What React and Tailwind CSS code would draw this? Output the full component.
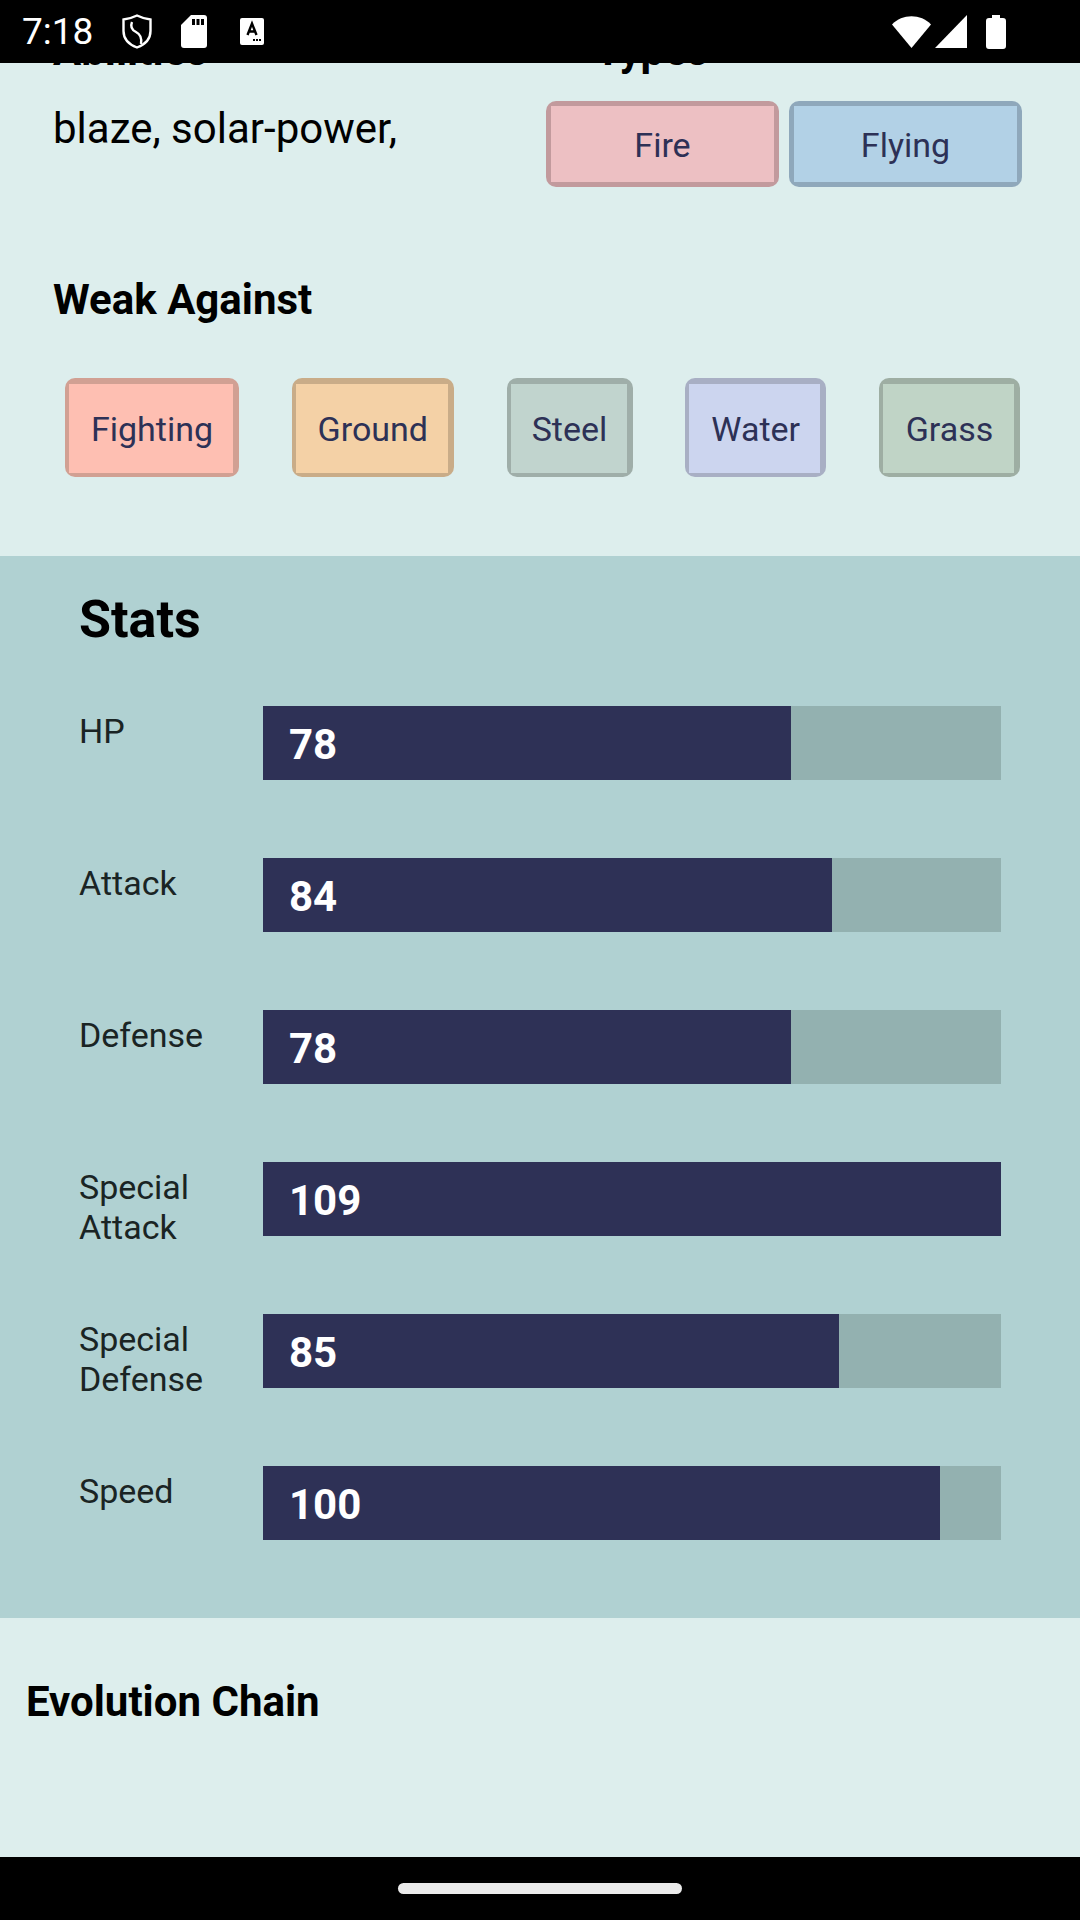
const stats = [
  { name: "HP", value: 78, w: 528 },
  { name: "Attack", value: 84, w: 569 },
  { name: "Defense", value: 78, w: 528 },
  { name: "Special Attack", value: 109, w: 738 },
  { name: "Special Defense", value: 85, w: 576 },
  { name: "Speed", value: 100, w: 677 },
];

const weak = [
  { t: "Fighting", w: "w-[174px]", bg: "bg-[#febfb2]", bd: "bg-[#d1a093]" },
  { t: "Ground", w: "w-[162px]", bg: "bg-[#f4d1a6]", bd: "bg-[#c9ac88]" },
  { t: "Steel", w: "w-[126px]", bg: "bg-[#c1d4ce]", bd: "bg-[#9faea9]" },
  { t: "Water", w: "w-[141px]", bg: "bg-[#ccd5ef]", bd: "bg-[#a8afc4]" },
  { t: "Grass", w: "w-[141px]", bg: "bg-[#c0d4c6]", bd: "bg-[#9eaea3]" },
];

function Chip({ t, w, h, bg, bd, edge, inner }) {
  return (
    <div className={`${w} ${h} ${bd} ${edge} rounded-[10px] flex`}>
      <div className={`flex-1 ${bg} ${inner} flex items-center justify-center text-[34px] text-[#2d3156]`}>{t}</div>
    </div>
  );
}

function StatusBar() {
  return (
    <div className="relative z-10 h-[63px] bg-black flex items-center justify-between text-white shrink-0">
      <div className="flex items-center pl-[22px]">
        <span className="text-[37px] leading-none w-[69px]">7:18</span>
        <svg className="ml-[31px]" width="30" height="35" viewBox="0 0 30 35" fill="none" stroke="white" strokeWidth="2.4">
          <path d="M15 1.5 C19 3.5 24 5 28.5 5.5 V17 C28.5 25 23 30.5 15 33.5 C7 30.5 1.5 25 1.5 17 V5.5 C6 5 11 3.5 15 1.5 Z" />
          <path d="M10 8 C8 13 10 16 14 18 C18 20 20 24 19 30" />
        </svg>
        <svg className="ml-[29px]" width="26" height="33" viewBox="0 0 26 33" fill="white">
          <path d="M10 0 H23 a3 3 0 0 1 3 3 V30 a3 3 0 0 1 -3 3 H3 a3 3 0 0 1 -3 -3 V10 Z" />
          <rect x="11" y="4" width="3" height="6" fill="black" />
          <rect x="15.5" y="4" width="3" height="6" fill="black" />
          <rect x="20" y="4" width="3" height="6" fill="black" />
        </svg>
        <svg className="ml-[33px]" width="24" height="27" viewBox="0 0 24 27">
          <rect width="24" height="27" rx="2" fill="white" />
          <path d="M7.5 17 L12 5.5 L16.5 17 M9.2 13.5 H14.8" fill="none" stroke="black" strokeWidth="2.4" />
          <rect x="13" y="21" width="2" height="2" />
          <rect x="16" y="21" width="2" height="2" />
          <rect x="19" y="21" width="2" height="2" />
        </svg>
      </div>
      <div className="flex items-center pr-[74px]">
        <svg width="39" height="32" viewBox="0 0 39 32" fill="white">
          <path d="M0 8.5 C10 -2.5 29 -2.5 39 8.5 L19.5 32 Z" />
        </svg>
        <svg className="ml-[4px]" width="32" height="33" viewBox="0 0 32 33" fill="white">
          <path d="M32 0 V33 H0 Z" />
        </svg>
        <svg className="ml-[19px]" width="20" height="34" viewBox="0 0 20 34" fill="white">
          <path d="M6 0 H14 V3 H17 a3 3 0 0 1 3 3 V31 a3 3 0 0 1 -3 3 H3 a3 3 0 0 1 -3 -3 V6 a3 3 0 0 1 3 -3 H6 Z" />
        </svg>
      </div>
    </div>
  );
}

export default function App() {
  return (
    <div className="w-[1080px] h-[1920px] bg-[#ddeeed] flex flex-col overflow-hidden font-['Roboto',sans-serif] text-black">
      <StatusBar />
      <div className="h-[493px] shrink-0 flex flex-col">
        <div className="flex h-[125px] shrink-0">
          <div className="w-[546px] pl-[53px] flex flex-col">
            <h3 className="text-[42px] font-bold leading-[49px] mt-[-37px]">Abilities</h3>
            <p className="text-[42px] leading-[49px] mt-[29px]">blaze, solar-power,</p>
          </div>
          <div className="flex-1 relative">
            <h3 className="absolute left-[49px] top-[-37px] text-[42px] font-bold leading-[49px]">Types</h3>
            <div className="flex gap-[10px] pt-[38px]">
              <Chip t="Fire" w="w-[233px]" h="h-[86px]" bg="bg-[#edc0c3]" bd="bg-[#c29a9d]" edge="p-[5px]" inner="pt-[3px]" />
              <Chip t="Flying" w="w-[233px]" h="h-[86px]" bg="bg-[#b2d1e6]" bd="bg-[#8fa8bb]" edge="p-[5px]" inner="pt-[3px]" />
            </div>
          </div>
        </div>
        <h3 className="text-[42px] font-bold leading-[49px] pl-[53px] mt-[87px]">Weak Against</h3>
        <div className="flex justify-between pl-[65px] pr-[60px] mt-[54px]">
          {weak.map((c) => (
            <Chip key={c.t} {...c} h="h-[99px]" edge="pt-[6px] pb-[4px] pl-[4px] pr-[6px]" inner="pl-[2px] pt-[1px]" />
          ))}
        </div>
      </div>
      <section className="h-[1062px] shrink-0 bg-[#b0d1d2] pl-[79px] pr-[79px] pt-[34px]">
        <h2 className="text-[52px] font-bold leading-[60px]">Stats</h2>
        <div className="mt-[56px] flex flex-col gap-[78px]">
          {stats.map((s) => (
            <div key={s.name} className="flex h-[74px]">
              <div className="w-[184px] shrink-0 text-[34px] leading-[40px] pt-[5px] pr-[30px] text-[#1a2424]">{s.name}</div>
              <div className="flex-1 bg-[#93b1b0]">
                <div className="h-full bg-[#2e3156] flex items-center pl-[26px] pt-[3px] text-[42px] font-bold text-white" style={{ width: s.w }}>
                  {s.value}
                </div>
              </div>
            </div>
          ))}
        </div>
      </section>
      <div className="flex-1 pl-[26px]">
        <h3 className="text-[42px] font-bold leading-[49px] mt-[59px]">Evolution Chain</h3>
      </div>
      <div className="h-[63px] shrink-0 bg-black flex justify-center pt-[26px]">
        <div className="w-[284px] h-[11px] rounded-full bg-[#ebebeb]" />
      </div>
    </div>
  );
}
